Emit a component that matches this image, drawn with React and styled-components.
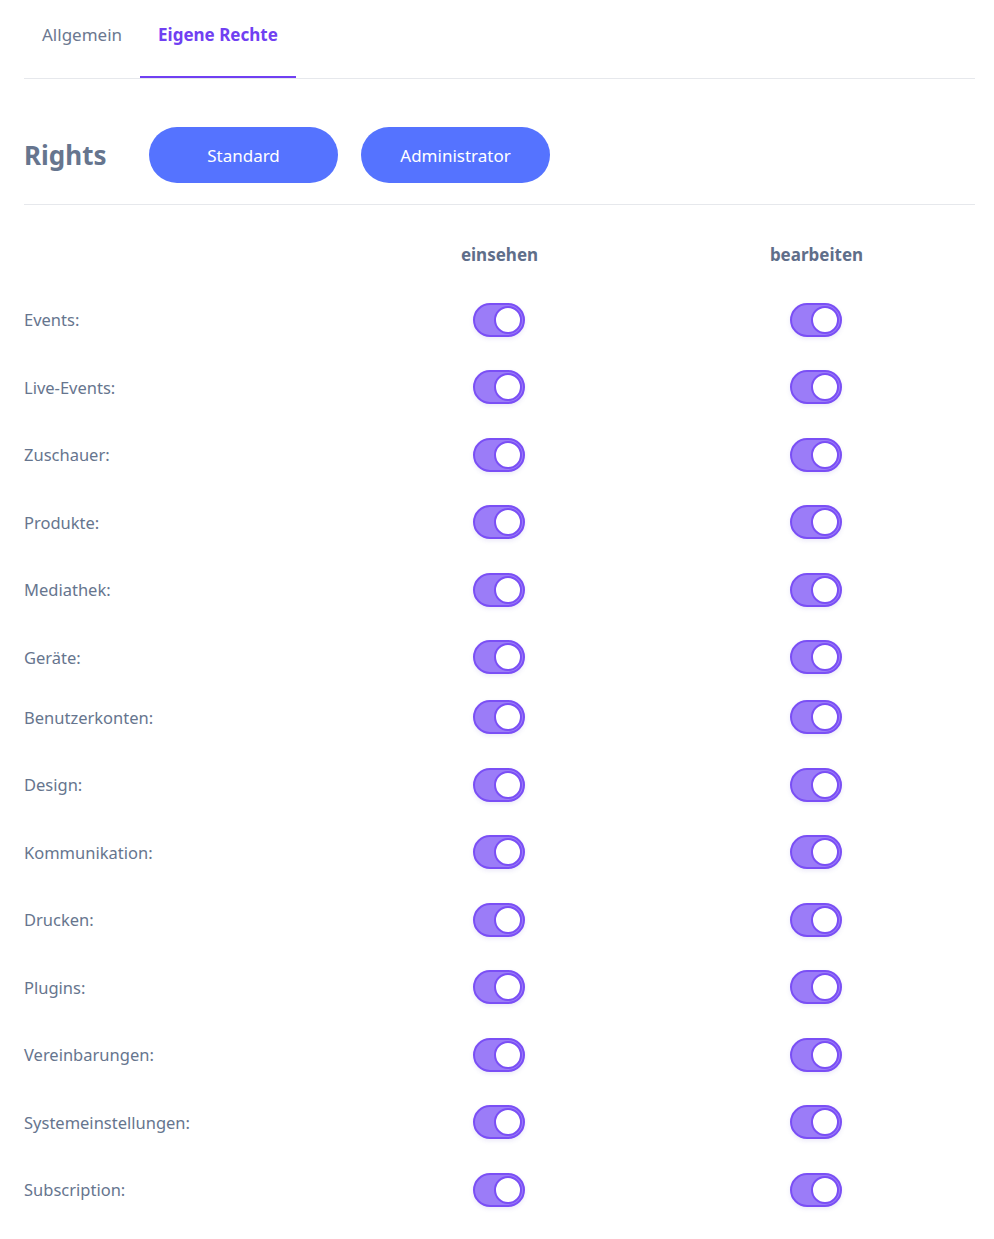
import React from "react";
import styled, { createGlobalStyle } from "styled-components";

const GlobalStyle = createGlobalStyle`
  body {
    margin: 0;
    background: #ffffff;
    font-family: "Noto Sans", "Open Sans", sans-serif;
  }
`;

const rights = [
  "Events:",
  "Live-Events:",
  "Zuschauer:",
  "Produkte:",
  "Mediathek:",
  "Geräte:",
  "Benutzerkonten:",
  "Design:",
  "Kommunikation:",
  "Drucken:",
  "Plugins:",
  "Vereinbarungen:",
  "Systemeinstellungen:",
  "Subscription:",
];

function Toggle({ checked }) {
  return (
    <Switch $checked={checked}>
      <Knob $checked={checked} />
    </Switch>
  );
}

export default function App() {
  return (
    <Page>
      <GlobalStyle />
      <Tabs>
        <Tab>Allgemein</Tab>
        <Tab $active>Eigene Rechte</Tab>
      </Tabs>

      <Header>
        <Title>Rights</Title>
        <PillButton>Standard</PillButton>
        <PillButton>Administrator</PillButton>
      </Header>

      <Table>
        <ColHead />
        <ColHead>einsehen</ColHead>
        <ColHead>bearbeiten</ColHead>
        {rights.map((name) => {
          const short = name === "Geräte:";
          return (
            <React.Fragment key={name}>
              <Label $short={short}>{name}</Label>
              <Cell $short={short}>
                <Toggle checked />
              </Cell>
              <Cell $short={short}>
                <Toggle checked />
              </Cell>
            </React.Fragment>
          );
        })}
      </Table>
    </Page>
  );
}

const Page = styled.div`
  padding: 0 19px 20px 24px;
`;

const Tabs = styled.div`
  display: flex;
  border-bottom: 1px solid #e6e8ec;
`;

const Tab = styled.div`
  padding: 23px 18px 0;
  height: 53px;
  font-size: 17px;
  line-height: 24px;
  font-weight: ${(p) => (p.$active ? 700 : 400)};
  color: ${(p) => (p.$active ? "#7040f2" : "#6b7890")};
  border-bottom: 2px solid ${(p) => (p.$active ? "#7040f2" : "transparent")};
  cursor: pointer;
`;

const Header = styled.div`
  display: flex;
  align-items: center;
  gap: 23px;
  padding: 48px 0 21px;
  border-bottom: 1px solid #e6e8ec;
`;

const Title = styled.h2`
  margin: 0 21px 0 0;
  width: 81px;
  font-size: 26px;
  font-weight: 700;
  color: #66758e;
`;

const PillButton = styled.button`
  width: 189px;
  height: 56px;
  border: none;
  border-radius: 28px;
  background: #5573ff;
  color: #ffffff;
  font-family: "Noto Sans", "Open Sans", sans-serif;
  font-size: 17px;
  cursor: pointer;
`;

const Table = styled.div`
  display: grid;
  grid-template-columns: 1fr 1fr 1fr;
  padding-top: 38px;
`;

const ColHead = styled.div`
  height: 43px;
  text-align: center;
  font-size: 17px;
  line-height: 24px;
  font-weight: 700;
  color: #5f6e8a;
`;

const Row = styled.div`
  display: flex;
  align-items: center;
  box-sizing: border-box;
  height: ${(p) => (p.$short ? "60px" : "67.5px")};
  padding-top: ${(p) => (p.$short ? "7px" : "0")};
`;

const Label = styled(Row)`
  font-size: 16.5px;
  color: #66758e;
`;

const Cell = styled(Row)`
  justify-content: center;
`;

const Switch = styled.div`
  position: relative;
  width: 48px;
  height: 30px;
  margin-left: -1px;
  border-radius: 17px;
  border: 2px solid #7a4ff5;
  background: ${(p) => (p.$checked ? "#9b7cf8" : "#e5e7eb")};
  box-shadow: 0 2px 4px rgba(100, 80, 200, 0.12);
  cursor: pointer;
`;

const Knob = styled.div`
  position: absolute;
  top: 1px;
  left: ${(p) => (p.$checked ? "19px" : "1px")};
  width: 24px;
  height: 24px;
  border-radius: 50%;
  background: #ffffff;
  border: 2px solid #7a4ff5;
`;
